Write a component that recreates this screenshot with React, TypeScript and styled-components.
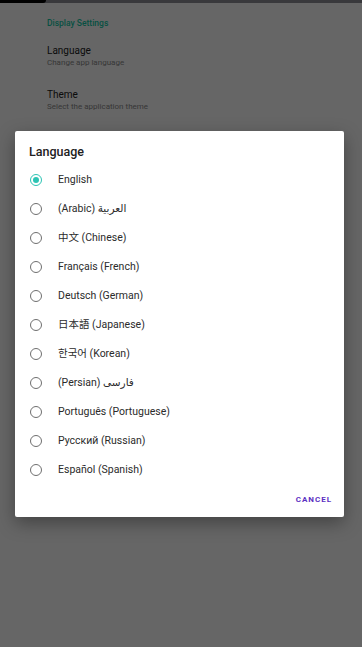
import React, { useState } from "react";
import styled, { createGlobalStyle } from "styled-components";

const GlobalStyle = createGlobalStyle`
  html, body {
    margin: 0;
    padding: 0;
    background: #ffffff;
    font-family: Roboto, "Noto Sans", "Noto Sans CJK SC", sans-serif;
  }
`;

const LANGUAGES = [
  "English",
  "(Arabic) العربية",
  "中文 (Chinese)",
  "Français (French)",
  "Deutsch (German)",
  "日本語 (Japanese)",
  "한국어 (Korean)",
  "(Persian) فارسی",
  "Português (Portuguese)",
  "Русский (Russian)",
  "Español (Spanish)",
];

const Screen = styled.div`
  position: relative;
  width: 362px;
  height: 647px;
  overflow: hidden;
  background: #ffffff;
`;

const StatusBar = styled.div`
  display: flex;
  height: 3px;
  background: #8e8e96;
`;

const StatusNotch = styled.div`
  width: 46px;
  height: 3px;
  background: #000000;
  border-bottom-right-radius: 3px;
`;

const Settings = styled.div`
  display: flex;
  flex-direction: column;
  padding: 14px 0 0 47px;
`;

const SectionTitle = styled.div`
  font-size: 8.5px;
  font-weight: 500;
  line-height: 12px;
  color: #14c9a6;
  margin-bottom: 15px;
`;

const Pref = styled.div`
  display: flex;
  flex-direction: column;
  margin-bottom: 20px;
`;

const PrefTitle = styled.div`
  font-size: 10px;
  line-height: 13px;
  color: #202020;
`;

const PrefSummary = styled.div`
  font-size: 8px;
  line-height: 11px;
  color: #8a8a8a;
`;

const Scrim = styled.div`
  position: absolute;
  inset: 0;
  background: rgba(0, 0, 0, 0.6);
  display: flex;
  align-items: center;
  justify-content: center;
  padding-right: 3px;
`;

const Dialog = styled.div`
  width: 329px;
  background: #ffffff;
  border-radius: 2px;
  box-shadow: 0 6px 18px rgba(0, 0, 0, 0.35);
  display: flex;
  flex-direction: column;
`;

const DialogTitle = styled.div`
  padding: 13px 14px 0 14px;
  font-size: 12.5px;
  font-weight: 500;
  line-height: 16px;
  color: #212121;
`;

const List = styled.div`
  display: flex;
  flex-direction: column;
  margin-top: 6px;
`;

const Row = styled.label`
  display: flex;
  align-items: center;
  height: 29px;
  padding-left: 15px;
  cursor: pointer;
`;

const Radio = styled.span<{ $checked: boolean }>`
  box-sizing: border-box;
  width: 12px;
  height: 12px;
  border-radius: 50%;
  border: 1.3px solid ${(p) => (p.$checked ? "#2cc4b4" : "#6f6f6f")};
  display: flex;
  align-items: center;
  justify-content: center;
  flex-shrink: 0;

  &::after {
    content: "";
    width: 6px;
    height: 6px;
    border-radius: 50%;
    background: ${(p) => (p.$checked ? "#2cc4b4" : "transparent")};
  }
`;

const RowLabel = styled.span`
  margin-left: 16px;
  font-size: 10.5px;
  line-height: 14px;
  color: #2b2b2b;
  font-family: Roboto, "Noto Sans", "Noto Sans CJK SC", "DejaVu Sans", sans-serif;
`;

const Actions = styled.div`
  display: flex;
  justify-content: flex-end;
  padding: 7.5px 12px 8.5px 0;
`;

const CancelButton = styled.button`
  border: none;
  background: none;
  padding: 0;
  font-family: Roboto, sans-serif;
  font-size: 8px;
  font-weight: 700;
  letter-spacing: 1px;
  line-height: 16px;
  color: #5c2fc2;
  cursor: pointer;
`;

export default function App() {
  const [selected, setSelected] = useState(0);

  return (
    <>
      <GlobalStyle />
      <Screen>
        <StatusBar>
          <StatusNotch />
        </StatusBar>
        <Settings>
          <SectionTitle>Display Settings</SectionTitle>
          <Pref>
            <PrefTitle>Language</PrefTitle>
            <PrefSummary>Change app language</PrefSummary>
          </Pref>
          <Pref>
            <PrefTitle>Theme</PrefTitle>
            <PrefSummary>Select the application theme</PrefSummary>
          </Pref>
        </Settings>
        <Scrim>
          <Dialog>
            <DialogTitle>Language</DialogTitle>
            <List>
              {LANGUAGES.map((lang, index) => (
                <Row key={lang} onClick={() => setSelected(index)}>
                  <Radio $checked={selected === index} />
                  <RowLabel>{lang}</RowLabel>
                </Row>
              ))}
            </List>
            <Actions>
              <CancelButton>CANCEL</CancelButton>
            </Actions>
          </Dialog>
        </Scrim>
      </Screen>
    </>
  );
}
